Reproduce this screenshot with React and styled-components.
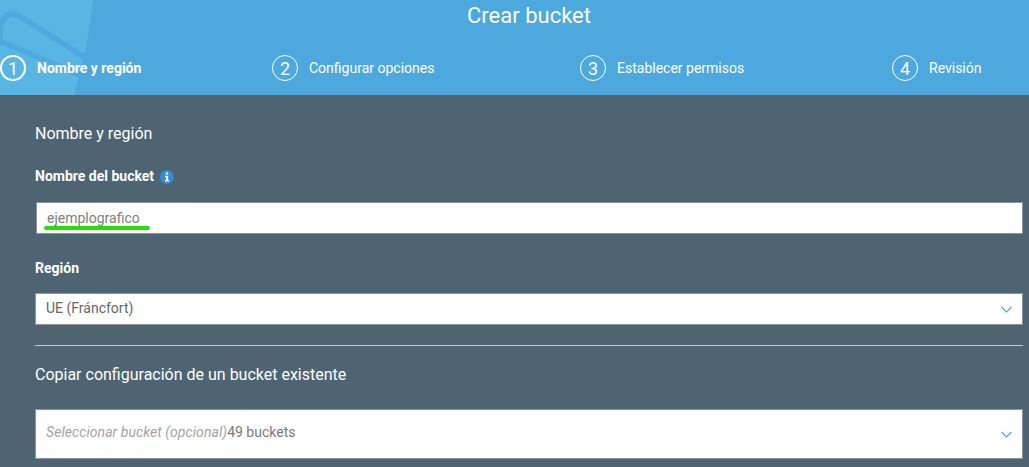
import React from "react";
import styled, { createGlobalStyle } from "styled-components";

const Global = createGlobalStyle`
  html, body { margin: 0; padding: 0; background: #4e6472; }
  body { font-family: Roboto, "Liberation Sans", sans-serif; overflow: hidden; }
`;

const Page = styled.div`
  width: 1029px;
  height: 467px;
  overflow: hidden;
  background: #4e6472;
`;

const Header = styled.header`
  position: relative;
  height: 95px;
  background: #4da8dd;
  overflow: hidden;
`;

const Deco = styled.svg`
  position: absolute;
  left: 0;
  top: 0;
`;

const Title = styled.h1`
  position: relative;
  margin: 0;
  padding: 1px 0 0 29px;
  text-align: center;
  font-size: 22px;
  line-height: 29px;
  font-weight: 400;
  color: #fff;
`;

const Steps = styled.ol`
  position: relative;
  list-style: none;
  margin: 25px 0 0;
  padding: 0;
  display: grid;
  grid-template-columns: 272px 308px 312px 1fr;
  color: #fff;
`;

const Step = styled.li`
  display: flex;
  align-items: center;
  gap: 11px;
  font-size: 14px;
  font-weight: ${(p) => (p.$active ? 700 : 400)};
`;

const Num = styled.span`
  box-sizing: border-box;
  width: 26px;
  height: 26px;
  border-radius: 50%;
  border: ${(p) => (p.$active ? "2px" : "1px")} solid #fff;
  display: flex;
  align-items: center;
  justify-content: center;
  font-size: 18px;
  font-weight: 400;
`;

const Body = styled.main`
  padding: 29px 6px 0 35px;
`;

const SectionTitle = styled.h2`
  margin: 0;
  font-size: 16px;
  line-height: 19px;
  font-weight: 400;
  color: #fff;
`;

const Label = styled.label`
  display: flex;
  align-items: center;
  gap: 6px;
  font-size: 14px;
  line-height: 17px;
  font-weight: 700;
  color: #fff;
`;

const NameLabel = styled(Label)`
  margin-top: 25px;
`;

const RegionLabel = styled(Label)`
  margin-top: 26px;
`;

const Field = styled.div`
  position: relative;
  box-sizing: border-box;
  display: flex;
  align-items: center;
  justify-content: space-between;
  height: ${(p) => p.$h || 32}px;
  margin-top: ${(p) => p.$mt}px;
  margin-left: ${(p) => p.$ml || 0}px;
  padding: 0 10px;
  background: #fff;
  border: 1px solid #8a9499;
  font-size: 14px;
  color: #666;
`;

const Value = styled.span`
  padding-bottom: ${(p) => p.$lift || 0}px;
  color: ${(p) => p.$color || "inherit"};
`;

const Underline = styled.span`
  position: absolute;
  left: 7px;
  top: 23px;
  width: 106px;
  height: 4px;
  border-radius: 2px;
  background: #22e000;
`;

const Placeholder = styled.em`
  color: #a3a3a3;
  font-style: italic;
  letter-spacing: 0.07px;
`;

const Rule = styled.hr`
  margin: 20px 0 0;
  border: 0;
  border-top: 1px solid #c4ccd1;
`;

const CopyTitle = styled(SectionTitle)`
  margin-top: 19px;
`;

const Chevron = () => (
  <svg width="11" height="7" viewBox="0 0 11 7" fill="none" stroke="#4aa6e0" strokeWidth="1.2">
    <path d="M0.5 1 L5.5 6 L10.5 1" />
  </svg>
);

const Info = () => (
  <svg width="14" height="14" viewBox="0 0 14 14">
    <circle cx="7" cy="7" r="7" fill="#2f8fd2" />
    <rect x="5.9" y="2.4" width="2.3" height="2.1" fill="#fff" />
    <path d="M5 5.7 H8.2 V10.2 H9.2 V11.6 H5 V10.2 H6 V7.1 H5 Z" fill="#fff" />
  </svg>
);

const steps = ["Nombre y región", "Configurar opciones", "Establecer permisos", "Revisión"];

export default function App() {
  return (
    <Page>
      <Global />
      <Header>
        <Deco width="110" height="95" viewBox="0 0 110 95" fill="none">
          <path d="M0 0 H93 Q88 50 74 95 H0 Z" fill="#58b5e4" />
          <path
            d="M0 41 Q-1 38 1 24 Q5 11 18 15 L84 57 M97 44 Q108 50 105 62 Q99 77 80 75 L0 41"
            stroke="#4ea9de"
            strokeWidth="5.5"
            strokeLinecap="round"
          />
        </Deco>
        <Title>Crear bucket</Title>
        <Steps>
          {steps.map((s, i) => (
            <Step key={s} $active={i === 0}>
              <Num $active={i === 0}>{i + 1}</Num>
              {s}
            </Step>
          ))}
        </Steps>
      </Header>
      <Body>
        <SectionTitle>Nombre y región</SectionTitle>
        <NameLabel>
          Nombre del bucket <Info />
        </NameLabel>
        <Field $mt={17} $ml={1}>
          <Value $color="#808080">ejemplografico</Value>
          <Underline />
        </Field>
        <RegionLabel>Región</RegionLabel>
        <Field $mt={16}>
          <Value $lift={2}>UE (Fráncfort)</Value>
          <Chevron />
        </Field>
        <Rule />
        <CopyTitle>Copiar configuración de un bucket existente</CopyTitle>
        <Field $mt={25} $h={50}>
          <Value $lift={4} $color="#7a7a7a">
            <Placeholder>Seleccionar bucket (opcional)</Placeholder>49 buckets
          </Value>
          <Chevron />
        </Field>
      </Body>
    </Page>
  );
}
